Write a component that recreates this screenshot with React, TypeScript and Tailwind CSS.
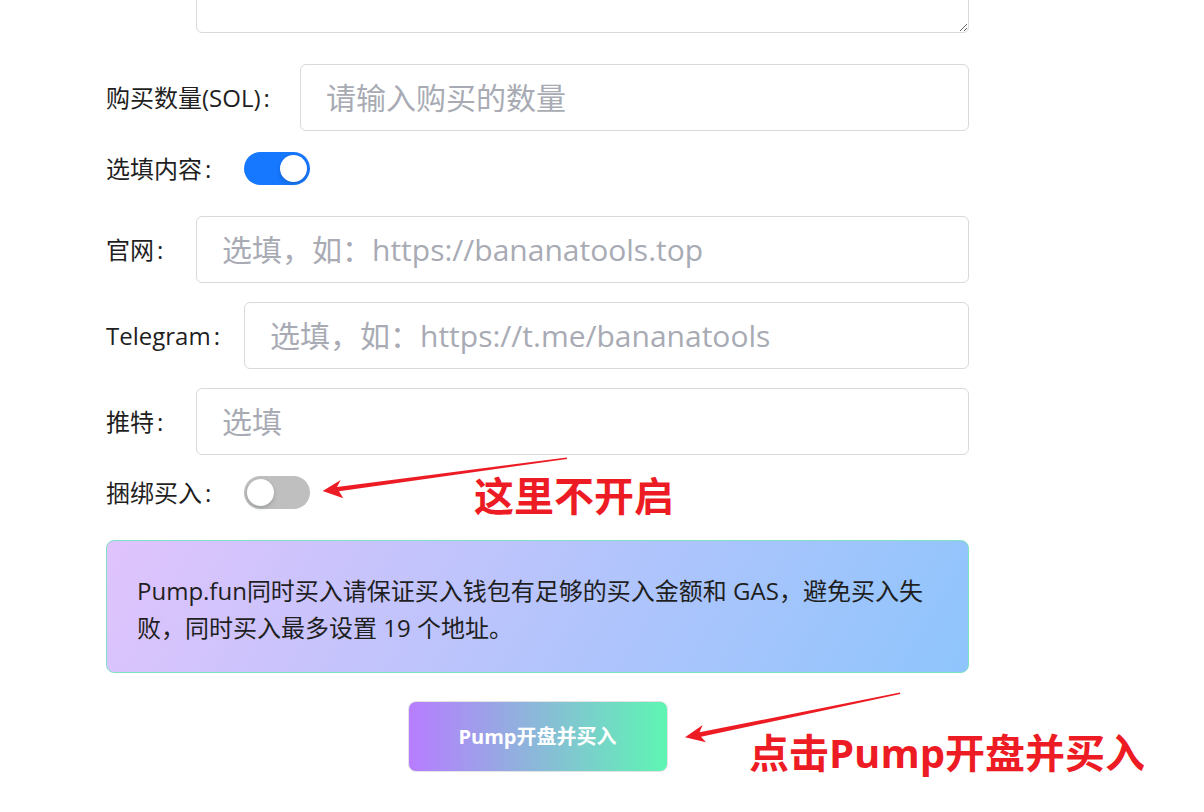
import type { ReactNode } from "react"

function Toggle({ on }: { on: boolean }) {
  return (
    <button
      type="button"
      role="switch"
      aria-checked={on}
      className={`relative h-[33px] w-[66px] shrink-0 rounded-full ${on ? "bg-[#1677ff]" : "bg-[#bfbfbf]"}`}
    >
      <span
        className={`absolute top-[3px] h-[27px] w-[27px] rounded-full bg-white shadow-[0_2px_4px_rgba(0,35,11,0.2)] ${
          on ? "right-[3px]" : "left-[3px]"
        }`}
      />
    </button>
  )
}

function Row({
  label,
  labelW,
  className,
  children,
}: {
  label: string
  labelW: string
  className: string
  children: ReactNode
}) {
  return (
    <div className={`flex items-center ${className}`}>
      <label className={`${labelW} shrink-0 text-[24px] leading-none text-[#1f1f1f]`}>
        {label}
        <span className="ml-[3px]">:</span>
      </label>
      <div className="flex min-w-0 flex-1 items-center">{children}</div>
    </div>
  )
}

function Field({ placeholder }: { placeholder: string }) {
  return (
    <input
      placeholder={placeholder}
      className="h-[67px] w-full rounded-[6px] border border-[#d9d9d9] bg-white px-[25px] text-[30px] text-[#1f1f1f] outline-none placeholder:text-[#a8abb4]"
    />
  )
}

export default function App() {
  return (
    <div className="relative h-[812px] w-full overflow-hidden bg-white font-['Open_Sans','Noto_Sans_CJK_SC',sans-serif]">
      <div className="ml-[106px] w-[863px]">
        {/* 上一项的文本框，只露出底部 */}
        <div className="-mt-[87px] flex">
          <div className="w-[90px] shrink-0" />
          <textarea className="h-[120px] w-full rounded-[6px] border border-[#d9d9d9] px-[25px] py-[12px] text-[24px] outline-none" />
        </div>

        <Row label="购买数量(SOL)" labelW="w-[194px]" className="mt-[31px]">
          <Field placeholder="请输入购买的数量" />
        </Row>

        <Row label="选填内容" labelW="w-[138px]" className="mt-[21px] h-[33px]">
          <Toggle on />
        </Row>

        <Row label="官网" labelW="w-[90px]" className="mt-[31px]">
          <Field placeholder="选填，如：https://bananatools.top" />
        </Row>

        <Row label="Telegram" labelW="w-[138px]" className="mt-[19px]">
          <Field placeholder="选填，如：https://t.me/bananatools" />
        </Row>

        <Row label="推特" labelW="w-[90px]" className="mt-[19px]">
          <Field placeholder="选填" />
        </Row>

        <Row label="捆绑买入" labelW="w-[138px]" className="mt-[21px] h-[33px]">
          <Toggle on={false} />
        </Row>

        {/* 提示 */}
        <div className="mt-[31px] rounded-[8px] border border-[#7ee3c4] bg-[linear-gradient(120deg,#e0c3fc_0%,#8ec5fc_100%)] px-[30px] pb-[26px] pt-[31px]">
          <p className="text-[24px] leading-[37px] text-[#1f1f1f]">
            Pump.fun同时买入请保证买入钱包有足够的买入金额和 GAS，避免买入失败，同时买入最多设置 19 个地址。
          </p>
        </div>

        <div className="mt-[28px] flex justify-center">
          <button
            type="button"
            className="h-[71px] w-[260px] rounded-[8px] border border-[#e3e3e3] bg-[linear-gradient(90deg,#b77dff_0%,#5ef5b3_100%)] text-[20px] font-bold text-white"
          >
            Pump开盘并买入
          </button>
        </div>
      </div>

      {/* 标注 */}
      <svg className="pointer-events-none absolute left-0 top-0" width="1204" height="812" viewBox="0 0 1204 812">
        <polygon
          fill="#ed1c24"
          points="322.7,491 340.7,480 337,487 566.8,457.6 567,459 339,491.3 343.3,498.3"
        />
        <polygon
          fill="#ed1c24"
          points="685,737.3 702.7,725 699.5,732.3 900,692.6 900.3,694 701,736.8 706,742.3"
        />
      </svg>
      <div className="absolute left-[474px] top-[476px] text-[40px] font-bold leading-none text-[#ed1c24]">
        这里不开启
      </div>
      <div className="absolute left-[749px] top-[733px] text-[40px] font-bold leading-none text-[#ed1c24]">
        点击Pump开盘并买入
      </div>
    </div>
  )
}
